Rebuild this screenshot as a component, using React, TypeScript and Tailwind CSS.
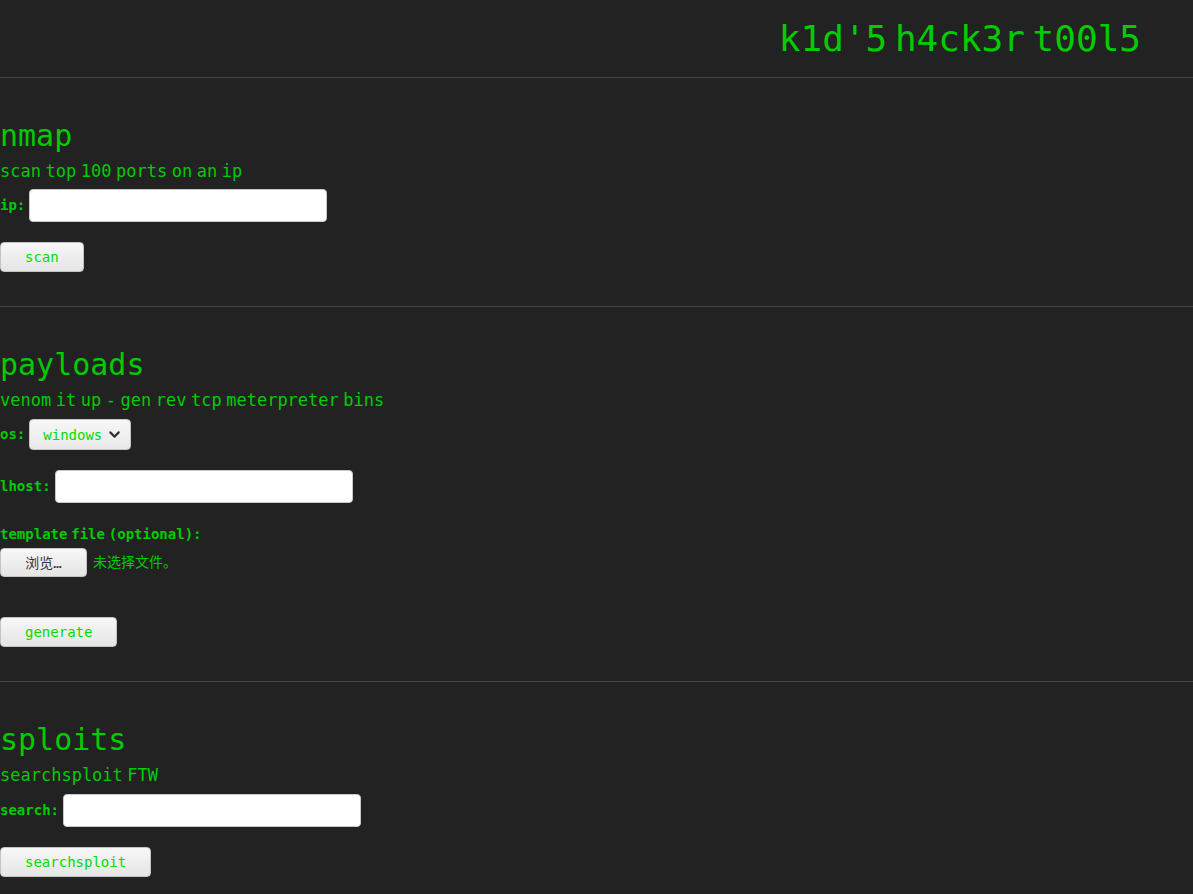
import { ChevronDown } from "lucide-react";

const mono = "font-['DejaVu_Sans_Mono','Noto_Sans_CJK_SC',monospace]";

function Label({ children }: { children: React.ReactNode }) {
  return (
    <label className="block text-[14px] font-bold leading-[17px] text-[#00cc00] [word-spacing:-4.6px]">
      {children}
    </label>
  );
}

function TextInput() {
  return (
    <input
      type="text"
      className="h-[33px] w-[298px] rounded-[4px] border border-[#c9c9c9] bg-white px-2 text-[14px] text-black outline-none"
    />
  );
}

function GrayButton({ children }: { children: React.ReactNode }) {
  return (
    <button className="h-[30px] rounded-[4px] border border-[#c4c4c4] bg-gradient-to-b from-[#f7f7f7] to-[#e5e5e5] px-[24px] text-[14px] leading-none text-[#00dd00]">
      {children}
    </button>
  );
}

function Heading({ title, sub }: { title: string; sub: string }) {
  return (
    <>
      <h2 className="mt-[40px] text-[30px] leading-[36px] text-[#00cc00]">{title}</h2>
      <p className="mt-[7px] text-[17px] leading-[20px] text-[#00cc00]">{sub}</p>
    </>
  );
}

export default function App() {
  return (
    <div className={`min-h-[894px] bg-[#222222] ${mono} [word-spacing:-5.7px]`}>
      <header className="flex h-[77px] items-center justify-end pr-[52px]">
        <h1 className="text-[36px] leading-none text-[#00cc00] [word-spacing:-14px]">k1d'5 h4ck3r t00l5</h1>
      </header>
      <hr className="border-0 border-t border-[#464646]" />

      {/* nmap */}
      <section className="flex flex-col items-start pb-[34px]">
        <Heading title="nmap" sub="scan top 100 ports on an ip" />
        <div className="mt-[8px] flex items-center gap-[4px]">
          <Label>ip:</Label>
          <TextInput />
        </div>
        <div className="mt-[20px] flex">
          <GrayButton>scan</GrayButton>
        </div>
      </section>
      <hr className="border-0 border-t border-[#464646]" />

      {/* payloads */}
      <section className="flex flex-col items-start pb-[34px]">
        <Heading title="payloads" sub="venom it up - gen rev tcp meterpreter bins" />
        <div className="mt-[9px] flex items-center gap-[4px]">
          <Label>os:</Label>
          <div className="flex h-[31px] w-[102px] items-center justify-between rounded-[4px] border border-[#c4c4c4] bg-gradient-to-b from-[#f7f7f7] to-[#e8e8e8] pl-[13px] pr-[7px]">
            <span className="text-[14px] leading-none text-[#00dd00]">windows</span>
            <ChevronDown size={17} strokeWidth={3} className="text-[#333]" />
          </div>
        </div>
        <div className="mt-[20px] flex items-center gap-[4px]">
          <Label>lhost:</Label>
          <TextInput />
        </div>
        <div className="mt-[23px]">
          <Label>template file (optional):</Label>
        </div>
        <div className="mt-[5px] flex items-center gap-[6px]">
          <button className="h-[29px] w-[87px] rounded-[4px] border border-[#c4c4c4] bg-gradient-to-b from-[#f7f7f7] to-[#e5e5e5] text-[14px] leading-none text-[#333]">
            浏览…
          </button>
          <span className="text-[14px] leading-[17px] text-[#00cc00]">未选择文件。</span>
        </div>
        <div className="mt-[40px] flex">
          <GrayButton>generate</GrayButton>
        </div>
      </section>
      <hr className="border-0 border-t border-[#464646]" />

      {/* sploits */}
      <section className="flex flex-col items-start pb-[20px]">
        <Heading title="sploits" sub="searchsploit FTW" />
        <div className="mt-[9px] flex items-center gap-[4px]">
          <Label>search:</Label>
          <TextInput />
        </div>
        <div className="mt-[20px] flex">
          <GrayButton>searchsploit</GrayButton>
        </div>
      </section>
    </div>
  );
}
